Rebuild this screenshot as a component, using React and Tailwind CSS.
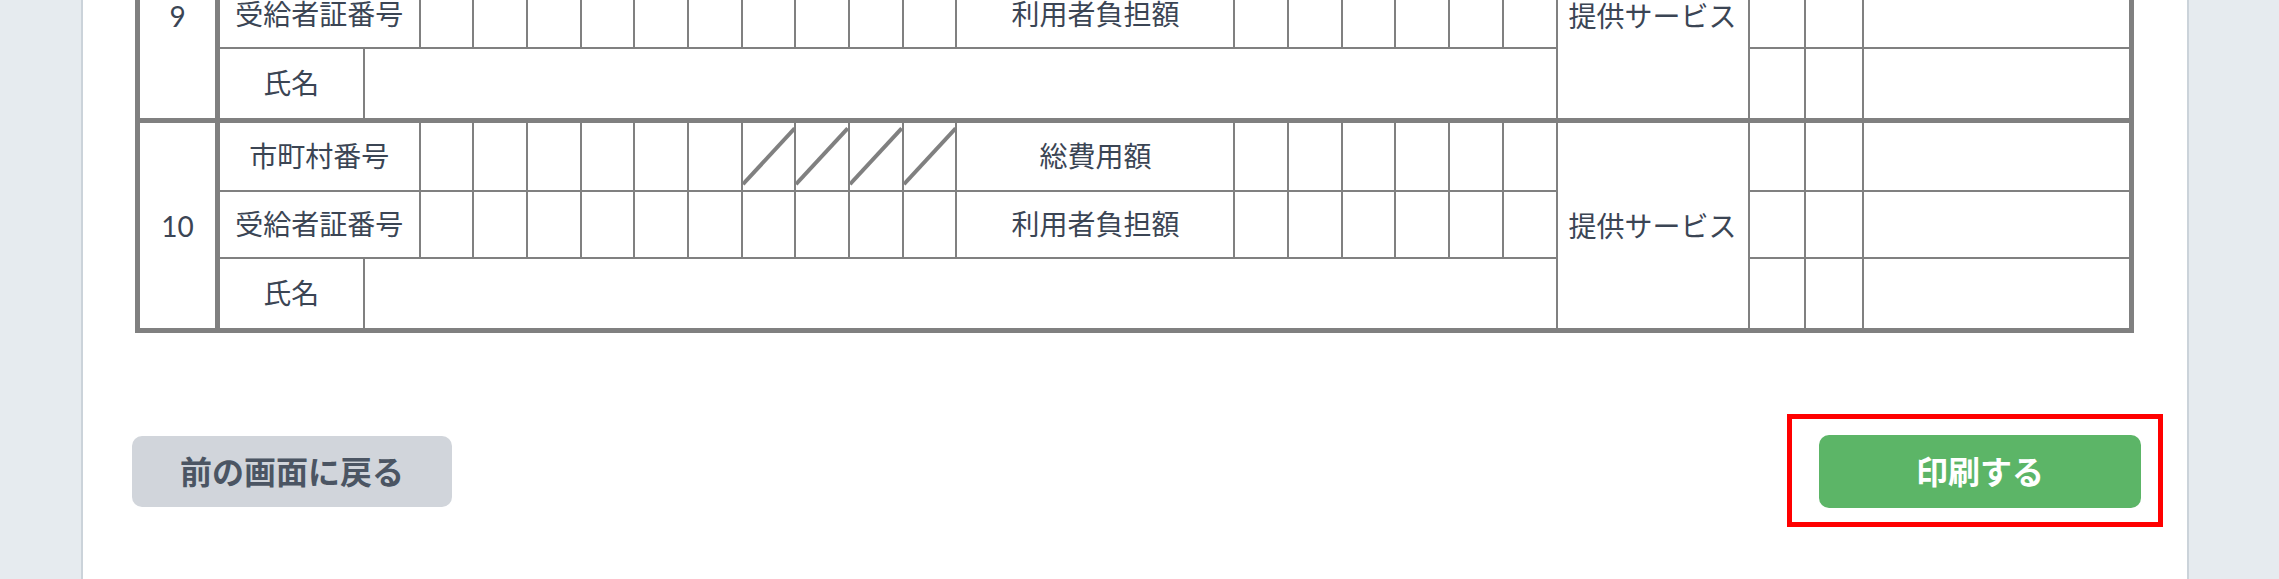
import React from 'react';

const cell = 'border-2 border-[#808080] p-0 text-center align-middle font-normal';

const Diagonal = () => (
  <svg className="absolute inset-0 w-full h-full" viewBox="0 0 100 100" preserveAspectRatio="none">
    <line x1="0" y1="92" x2="100" y2="8" stroke="#808080" strokeWidth="4" vectorEffect="non-scaling-stroke" />
  </svg>
);

const RecipientGroup = ({ no }) => {
  const digits = Array.from({ length: 10 });
  const amounts = Array.from({ length: 6 });

  return (
    <>
      <tr className="h-[70px]">
        <td rowSpan={3} className={`${cell} border-t-[5px] border-r-[5px]`}>{no}</td>
        <td colSpan={2} className={`${cell} border-t-[5px]`}>市町村番号</td>
        {digits.map((_, i) =>
          <td key={i} className={`${cell} border-t-[5px] relative`}>
            {i >= 6 && <Diagonal />}
          </td>
        )}
        <td className={`${cell} border-t-[5px]`}>総費用額</td>
        {amounts.map((_, i) =>
          <td key={i} className={`${cell} border-t-[5px]`}></td>
        )}
        <td rowSpan={3} className={`${cell} border-t-[5px]`}>提供サービス</td>
        <td className={`${cell} border-t-[5px]`}></td>
        <td className={`${cell} border-t-[5px]`}></td>
        <td className={`${cell} border-t-[5px]`}></td>
      </tr>
      <tr className="h-[67px]">
        <td colSpan={2} className={cell}>受給者証番号</td>
        {digits.map((_, i) =>
          <td key={i} className={cell}></td>
        )}
        <td className={cell}>利用者負担額</td>
        {amounts.map((_, i) =>
          <td key={i} className={cell}></td>
        )}
        <td className={cell}></td>
        <td className={cell}></td>
        <td className={cell}></td>
      </tr>
      <tr className="h-[73px]">
        <td className={cell}>氏名</td>
        <td colSpan={18} className={cell}></td>
        <td className={cell}></td>
        <td className={cell}></td>
        <td className={cell}></td>
      </tr>
    </>
  );
};

const App = () => {
  return (
    <div className="h-[579px] overflow-hidden bg-[#e6ebef] font-['Lato','Noto_Sans_CJK_JP',sans-serif]">
      <div className="flow-root ml-[81px] w-[2108px] h-full bg-white border-x-2 border-[#cbd3da] pl-[52px] pr-[53px]">
        {/* Recipient table (rows 9-10) */}
        <table className="-mt-[92px] w-[1999px] table-fixed border-collapse border-[5px] border-[#808080] text-[28px] leading-none text-[#3b4554]">
          <colgroup>
            <col className="w-[80px]" />
            <col className="w-[146px]" />
            <col className="w-[56px]" />
            {Array.from({ length: 10 }).map((_, i) => <col key={i} className="w-[53.7px]" />)}
            <col className="w-[278px]" />
            {Array.from({ length: 6 }).map((_, i) => <col key={i} className="w-[53.7px]" />)}
            <col className="w-[192px]" />
            <col className="w-[56px]" />
            <col className="w-[58px]" />
            <col />
          </colgroup>
          <tbody>
            <RecipientGroup no="9" />
            <RecipientGroup no="10" />
          </tbody>
        </table>

        {/* Actions */}
        <div className="mt-[102px] -ml-[3px] -mr-[7px] flex items-center justify-between">
          <button className="w-[320px] h-[71px] rounded-[10px] bg-[#d1d5db] text-[32px] font-bold text-[#4b5563]">
            前の画面に戻る
          </button>
          <div className="relative">
            <button className="w-[322px] h-[73px] rounded-[10px] bg-[#5cb567] text-[32px] font-bold text-white">
              印刷する
            </button>
            <span className="absolute -left-[32px] -right-[22px] -top-[21px] -bottom-[19px] border-[5px] border-[#f00] pointer-events-none"></span>
          </div>
        </div>
      </div>
    </div>
  );
};

export default App;
